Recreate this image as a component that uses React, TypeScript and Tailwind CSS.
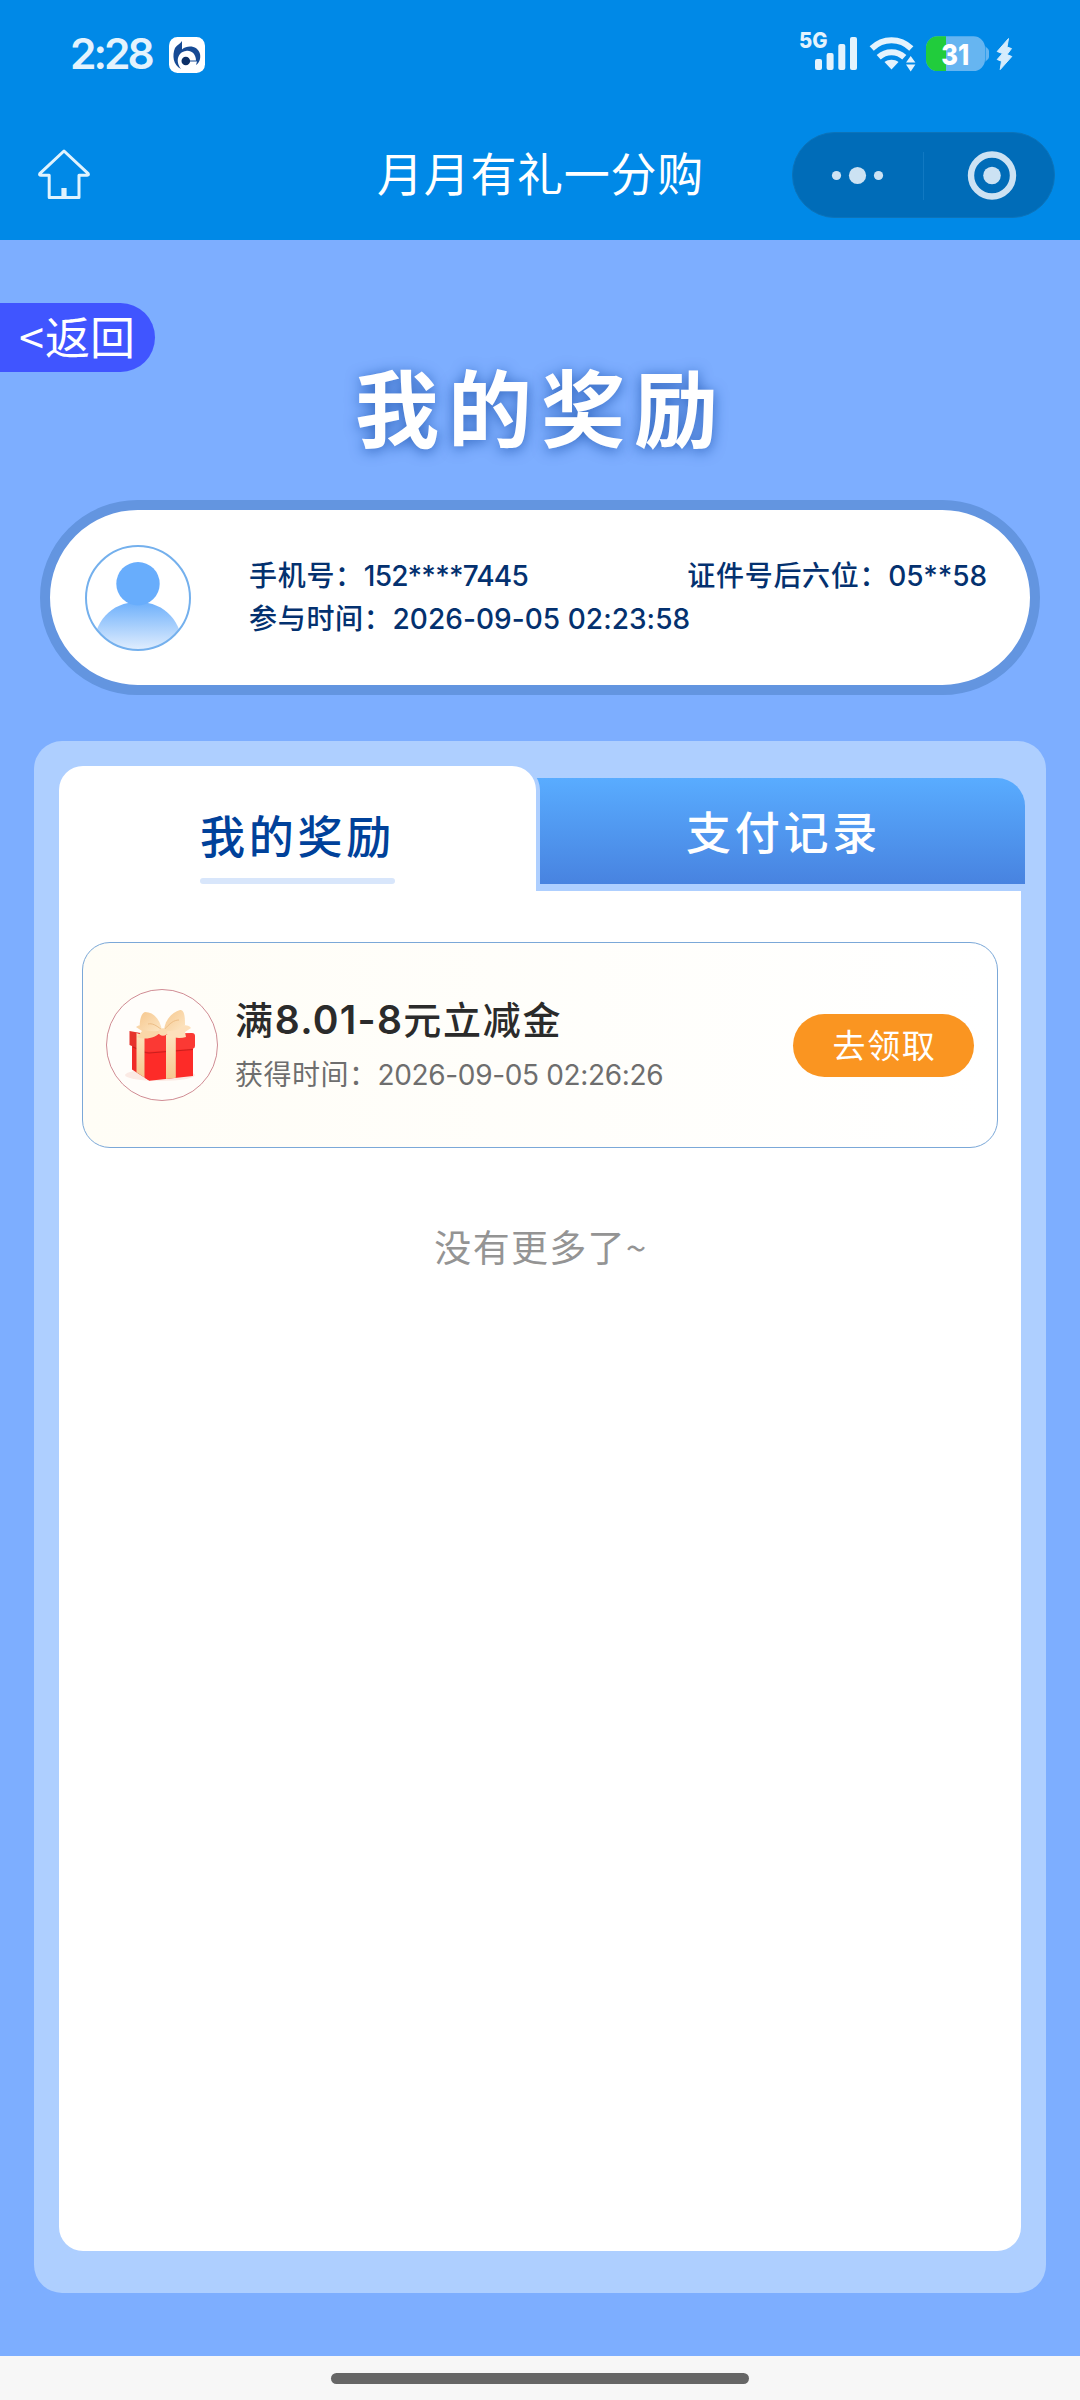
import type { ReactNode } from "react";

function Digits({ children, className = "" }: { children: ReactNode; className?: string }) {
  return <span className={`font-['Inter','Noto_Sans_CJK_SC',sans-serif] leading-none ${className}`}>{children}</span>;
}

function AppBadge() {
  return (
    <svg className="ml-[17px] h-9 w-9" viewBox="0 0 36 36">
      <rect width="36" height="36" rx="8.5" fill="#fff" />
      <path d="M13 4 V12.5 C19 7.5 29 9 31 17 C32 22 30 26 27 28 L28 24.6 H20 V23.4 H27 C27 17 22 13 17 14 C9 15 6 24 12 32 C4 28 3 18 6 11 C8 8 11 7 13 4Z" fill="#164a94" />
      <circle cx="16.8" cy="24" r="4.3" fill="#0b2f66" />
    </svg>
  );
}

function StatusIcons() {
  return (
    <svg className="h-[50px] w-[220px]" viewBox="796 28 220 50">
      <text x="799" y="48.3" fontSize="22" fontWeight="800" fill="#e4f3fd" fontFamily="Inter, sans-serif" textLength="28.5" lengthAdjust="spacingAndGlyphs">5G</text>
      <g fill="#e4f3fd">
        <rect x="815" y="59" width="7" height="11" rx="2" />
        <rect x="826.6" y="53" width="7" height="17" rx="2" />
        <rect x="838.3" y="44" width="7" height="26" rx="2" />
        <rect x="850" y="37" width="7" height="33" rx="2" />
        <path d="M891.5 69.5 L884.5 62 C888.5 59 894.5 59 898.5 62 Z" />
        <path d="M906 62.5 L910.7 56 L915.4 62.5Z M906 64.5 L910.7 71.5 L915.4 64.5Z" />
      </g>
      <g fill="none" stroke="#e4f3fd" strokeWidth="6">
        <path d="M871.7 48.5 C883 37.5 900 37.5 911.3 48.5" />
        <path d="M878.7 57.2 C886 50.5 897 50.5 904.3 57.2" />
      </g>
      <rect x="926" y="36.3" width="59" height="34.7" rx="11.5" fill="#66b5f1" />
      <path d="M985.5 46 C986 47.5 989 49 989 51 V57 C989 59 986 60.5 985.5 62Z" fill="#66b5f1" />
      <path d="M946 36.3 H937.5 A11.5 11.5 0 0 0 926 47.8 V59.5 A11.5 11.5 0 0 0 937.5 71 H946Z" fill="#21cc3c" />
      <text x="941.2" y="64.6" fontSize="29" fontWeight="800" fill="#fff" fontFamily="Inter, sans-serif" textLength="28" lengthAdjust="spacingAndGlyphs">31</text>
      <path d="M1008.5 38.5 L997.2 51.5 L1002.5 53.5 L997.2 59.5 L1001.5 61.2 L1000.2 69.6 L1011.8 56.5 L1007 54.6 L1011.5 48.6 L1007 47Z" fill="#d5ecfc" stroke="#d5ecfc" strokeWidth="1" strokeLinejoin="round" />
    </svg>
  );
}

function HomeIcon() {
  return (
    <svg className="h-[56px] w-[56px]" viewBox="36 148 56 56" fill="none" stroke="#e0f3fe" strokeWidth="3" strokeLinejoin="round">
      <path d="M64 152 L39.8 174.6 Q39 176.2 41 176.3 H49.2 V198.4 H79 V176.3 H87.2 Q89 176.2 88.2 174.6 Z" />
      <rect x="61.4" y="189" width="5.2" height="9" fill="#e0f3fe" stroke="none" />
    </svg>
  );
}

function Capsule() {
  return (
    <div className="flex h-[86px] w-[263px] items-center rounded-full border border-[#0c73b9] bg-[#006cb8]">
      <svg className="h-[84px] w-[261px]" viewBox="793 133 261 84" fill="#cce2f3">
        <circle cx="836.5" cy="175.5" r="4.6" />
        <circle cx="857.5" cy="175.5" r="8.6" />
        <circle cx="878.5" cy="175.5" r="4.6" />
        <rect x="923" y="152" width="1" height="48" fill="#1179c2" />
        <circle cx="992" cy="175.5" r="21" fill="none" stroke="#cce2f3" strokeWidth="6.4" />
        <circle cx="992" cy="175.5" r="8.8" />
      </svg>
    </div>
  );
}

function Avatar() {
  return (
    <svg className="h-[106px] w-[106px] shrink-0" viewBox="0 0 106 106">
      <defs>
        <clipPath id="avatarClip"><circle cx="53" cy="53" r="52" /></clipPath>
        <linearGradient id="avatarBody" x1="0" y1="0" x2="0" y2="1">
          <stop offset="0" stopColor="#6eb0fb" />
          <stop offset="1" stopColor="#e3effe" />
        </linearGradient>
      </defs>
      <path clipPath="url(#avatarClip)" d="M8 106 C8 78 25 57 53 57 C81 57 98 78 98 106Z" fill="url(#avatarBody)" />
      <circle cx="53" cy="38.7" r="21.7" fill="#68adfc" />
      <circle cx="53" cy="53" r="52" fill="none" stroke="#74b0ed" strokeWidth="2" />
    </svg>
  );
}

function GiftIcon() {
  return (
    <svg className="h-28 w-28 shrink-0" viewBox="0 0 112 112">
      <defs>
        <linearGradient id="ribbon" x1="0" y1="0" x2="0" y2="1">
          <stop offset="0" stopColor="#fde3bd" />
          <stop offset="1" stopColor="#f6c890" />
        </linearGradient>
        <linearGradient id="bow" x1="0" y1="0" x2="1" y2="1">
          <stop offset="0" stopColor="#f6c88f" />
          <stop offset="1" stopColor="#fde6c4" />
        </linearGradient>
      </defs>
      <circle cx="56" cy="56" r="55.5" fill="#fffdfa" stroke="#d08c94" />
      <ellipse cx="54" cy="86" rx="35" ry="6" fill="#fbeae4" />
      <path d="M26 55 L40 60 L43.5 91.8 L26 80.5Z" fill="#f02b26" />
      <path d="M39 58 L87 56 V87 L43.5 91.8 L39 89Z" fill="#fd2b28" />
      <path d="M23.5 42 L40 45 V63 L23.5 56Z" fill="#e6332c" />
      <path d="M38 45 L86 44 Q89 44 89 47 V57 Q89 59.5 86.5 59.7 L43 62.8 Q38 63 38 59Z" fill="#fb3934" />
      <path d="M27 58 L39 63.5 L43 64 L87 60.5" fill="none" stroke="#c91f1d" strokeWidth="1.2" />
      <path d="M30.5 44 L38.5 47 V88.5 L30.5 83.3Z" fill="url(#ribbon)" />
      <path d="M60 46 H69.8 V88.8 L60 90Z" fill="url(#ribbon)" />
      <path d="M55 42 C50 50 38 51 31 48 L36 42 L30 38 C34 34 45 36 55 42Z" fill="#fad6a8" />
      <path d="M57 42 C62 49 73 50 80 48 L79 43 L85 39 C83 34 67 35 57 42Z" fill="#fde0bb" />
      <path d="M56 41 C46 44 38 41 34 39 C33 33 35 24 39 23 C48 23 54 31 56 41Z" fill="url(#bow)" />
      <path d="M58 41 C59 31 66 23 74 21 C79 20 79 31 79 36 C73 42 65 43 58 41Z" fill="url(#bow)" />
      <path d="M56 41 C50 36 46 34 42 35 M58 41 C64 34 68 31 73 31" fill="none" stroke="#edbd85" strokeWidth="1" />
      <ellipse cx="57" cy="43" rx="4.5" ry="3.8" fill="#fbdbb0" />
    </svg>
  );
}

export default function App() {
  return (
    <div className="flex h-[2400px] w-[1080px] flex-col overflow-hidden bg-[#7daeff] font-['Noto_Sans_CJK_SC',sans-serif] whitespace-nowrap">
      <header className="h-[240px] shrink-0 bg-[#0089e7]">
        <div className="flex h-[110px] items-center pl-[70px]">
          <Digits className="mb-[1px] w-[82px] text-[42.5px] font-semibold tracking-[-3px] text-[#e4f3fd]">2:28</Digits>
          <AppBadge />
          <div className="mb-1 ml-auto pr-16">
            <StatusIcons />
          </div>
        </div>
        <div className="mt-[22px] flex h-[86px] items-center pr-[25px] pl-9">
          <HomeIcon />
          <h1 className="mb-[7px] ml-[285px] text-[46px] leading-[79px] tracking-[0.7px] text-white">月月有礼一分购</h1>
          <div className="ml-auto">
            <Capsule />
          </div>
        </div>
      </header>

      <main className="flex flex-1 flex-col">
        <button className="mt-[63px] flex h-[69px] w-[155px] items-center rounded-r-full bg-[#4055ff] pb-1 pl-[18px] text-[45px] leading-[65px] text-white">
          <span className="w-[27px]">&lt;</span>
          <span>返回</span>
        </button>

        <h2 className="-mt-[15px] pl-[355px] text-[84px] leading-[96px] font-bold tracking-[9px] text-white [text-shadow:0_2px_14px_rgba(20,75,165,0.75)]">
          我的奖励
        </h2>

        <section className="mx-10 mt-[47px] flex h-[195px] items-center rounded-full border-[10px] border-[#6395e0] bg-white pl-[35px] text-[#04316f]">
          <Avatar />
          <div className="mb-1 ml-[58px] flex h-[86px] w-[738px] flex-col text-[28px] leading-[43px] font-medium tracking-[0.7px]">
            <div className="flex h-[43px] justify-between">
              <p>
                手机号：<Digits className="tracking-[-0.8px]">152****7445</Digits>
              </p>
              <p>
                证件号后六位：<Digits className="tracking-[-0.1px]">05**58</Digits>
              </p>
            </div>
            <p className="h-[43px]">
              参与时间：<Digits className="tracking-[0.05px]">2026-09-05 02:23:58</Digits>
            </p>
          </div>
        </section>

        <section className="mx-[34px] mt-[46px] flex h-[1552px] flex-col rounded-[28px] bg-[#aecfff] pt-[25px] pr-[21px] pl-[25px]">
          <div className="flex h-[125px] items-start">
            <div className="z-10 flex h-[125px] w-[477px] flex-col items-center rounded-t-[24px] bg-white pt-[34px] shadow-[4px_0_0_#aecfff]">
              <span className="h-[78px] w-[195px] text-[45px] leading-[70px] font-medium tracking-[3.75px] text-[#00419a]">
                我的奖励
              </span>
              <div className="h-[6px] w-[195px] rounded-full bg-[#d8e6fb]" />
            </div>
            <div className="mt-3 h-[106px] flex-1 rounded-tr-[28px] bg-gradient-to-b from-[#59acff] to-[#4883e0] pl-[150px] text-[45px] leading-[105px] font-medium tracking-[3.75px] text-white">
              支付记录
            </div>
          </div>
          <div className="mr-1 h-[1360px] rounded-b-[24px] bg-white px-[23px] pt-[51px]">
            <article className="flex h-[206px] items-center rounded-[28px] border border-[#7ba8d8] bg-gradient-to-r from-[#fffdf6] to-white pr-[23px] pl-[23px]">
              <GiftIcon />
              <div className="mb-[3px] ml-[17px]">
                <h3 className="h-[56px] text-[38px] leading-[50px] font-medium tracking-[1.7px] text-[#2b2b2b]">
                  满<Digits className="text-[39px] font-semibold tracking-[1.3px]">8.01-8</Digits>元立减金
                </h3>
                <p className="h-[46px] text-[28px] leading-[48px] tracking-[0.5px] text-[#6e6e6e]">
                  获得时间：<Digits className="tracking-[-0.35px]">2026-09-05 02:26:26</Digits>
                </p>
              </div>
              <button className="ml-auto h-[63px] w-[181px] rounded-full bg-[#fa9521] pb-[3px] pl-[2px] text-[33px] leading-[60px] tracking-[1.6px] text-white">
                去领取
              </button>
            </article>
            <p className="mt-[68px] pl-[2px] text-center text-[37px] leading-[60px] tracking-[1.3px] text-[#949494]">没有更多了~</p>
          </div>
        </section>
      </main>

      <footer className="flex h-11 shrink-0 justify-center bg-[#f7f7f7] pt-[17px]">
        <div className="h-[11px] w-[418px] rounded-full bg-[#666]" />
      </footer>
    </div>
  );
}
